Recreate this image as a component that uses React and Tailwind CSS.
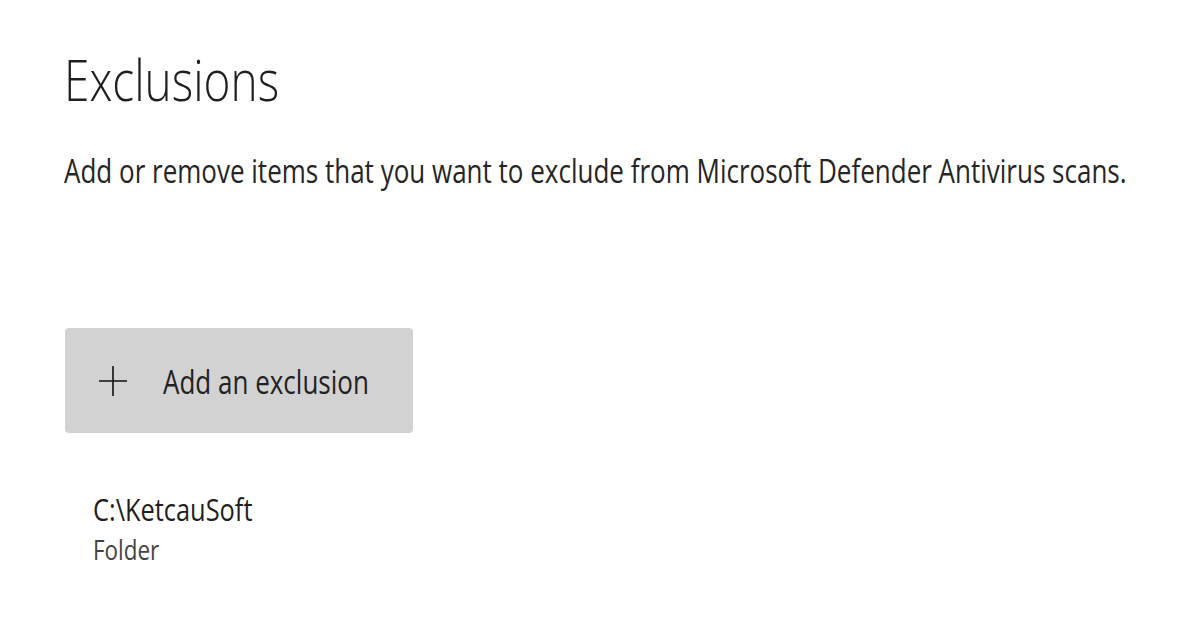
export default function App() {
  const txt = "inline-block origin-center scale-y-[1.25]";
  return (
    <div className="w-[1200px] h-[630px] bg-white overflow-hidden text-[#1f1f1f]" style={{ fontFamily: '"Open Sans", "Noto Sans", sans-serif' }}>
      <div className="pl-[64px] pt-[48px] flex flex-col items-start">
        <h1 className="h-[60px] flex items-center text-[46px] font-light leading-none">
          <span className={txt}>Exclusions</span>
        </h1>
        <p className="mt-[47px] h-[30px] flex items-center text-[26px] leading-none text-[#262626]">
          <span className={txt}>Add or remove items that you want to exclude from Microsoft Defender Antivirus scans.</span>
        </p>
        <button className="mt-[143px] ml-[1px] w-[348px] h-[105px] rounded-[4px] bg-[#d2d2d2] flex items-center">
          <svg width="28" height="30" viewBox="0 0 28 30" className="ml-[34px]">
            <path d="M14 0v30M0 15h28" stroke="#111" strokeWidth="1.6" fill="none" />
          </svg>
          <span className="ml-[36px] text-[26px] leading-none text-[#222]">
            <span className={txt}>Add an exclusion</span>
          </span>
        </button>
        <div className="mt-[62px] ml-[29px] flex flex-col">
          <span className="h-[30px] flex items-center text-[25.4px] leading-none text-[#1f1f1f]">
            <span className={txt}>C:\KetcauSoft</span>
          </span>
          <span className="mt-[12px] h-[26px] flex items-center text-[22.4px] leading-none text-[#444]">
            <span className={txt}>Folder</span>
          </span>
        </div>
      </div>
    </div>
  );
}
